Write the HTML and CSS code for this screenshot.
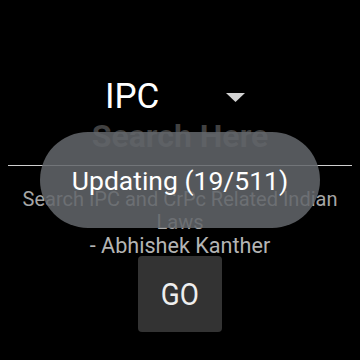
FILE: index.html
```html
<!DOCTYPE html>
<html>
<head>
<meta charset="utf-8">
<link rel="stylesheet" href="styles.css">
</head>
<body>
<div class="screen">
  <div class="spinner">
    <span class="spinner-text">IPC</span>
    <svg class="spinner-arrow" width="19" height="9" viewBox="0 0 19 9"><polygon points="0,0 19,0 9.5,9" fill="#d2d2d2"/></svg>
  </div>
  <div class="search">
    <span class="hint">Search Here</span>
  </div>
  <div class="desc">
    <p class="desc-main">Search IPC and CrPc Related Indian Laws</p>
    <p class="desc-author">- Abhishek Kanther</p>
  </div>
  <button class="go"><span class="go-label">GO</span></button>
  <div class="toast">Updating (19/511)</div>
</div>
</body>
</html>
```
FILE: styles.css
```css
html, body {
  margin: 0;
  padding: 0;
  background: #000;
}
.screen {
  position: relative;
  width: 360px;
  height: 360px;
  overflow: hidden;
  display: flex;
  flex-direction: column;
  align-items: center;
  font-family: Roboto, "Noto Sans", sans-serif;
  padding-top: 76px;
  box-sizing: border-box;
}
.spinner {
  width: 150px;
  height: 41px;
  display: flex;
  align-items: center;
  justify-content: space-between;
  padding-right: 10px;
  box-sizing: border-box;
  margin-left: 0;
}
.spinner-text {
  color: #fff;
  font-size: 35px;
  line-height: 41px;
}
.spinner-arrow {
  margin-top: 1px;
}
.search {
  width: 344px;
  border-bottom: 1px solid #cfcfcf;
  display: flex;
  justify-content: center;
  height: 48px;
}
.hint {
  color: #414141;
  font-weight: bold;
  font-size: 32px;
  line-height: 38px;
}
.desc {
  width: 340px;
  text-align: center;
  color: #a6a6a6;
  font-size: 20px;
  line-height: 23px;
  margin-top: 22px;
}
.desc p {
  margin: 0;
}
.desc-author {
  color: #b4b4b4;
  font-size: 21.6px;
  line-height: 24px;
}
.go {
  margin-top: -2px;
  width: 84px;
  height: 76px;
  border: none;
  border-radius: 4px;
  background: #333333;
  color: #eeeeee;
  font-family: Roboto, "Noto Sans", sans-serif;
  font-size: 32px;
  padding: 0;
  display: flex;
  align-items: center;
  justify-content: center;
}
.go-label {
  display: inline-block;
  transform: scaleX(0.87);
}
.toast {
  position: absolute;
  left: 40px;
  top: 132px;
  width: 280px;
  height: 96px;
  border-radius: 48px;
  background: rgba(99, 103, 107, 0.86);
  color: #ffffff;
  font-size: 26.5px;
  display: flex;
  align-items: center;
  justify-content: center;
}
```
